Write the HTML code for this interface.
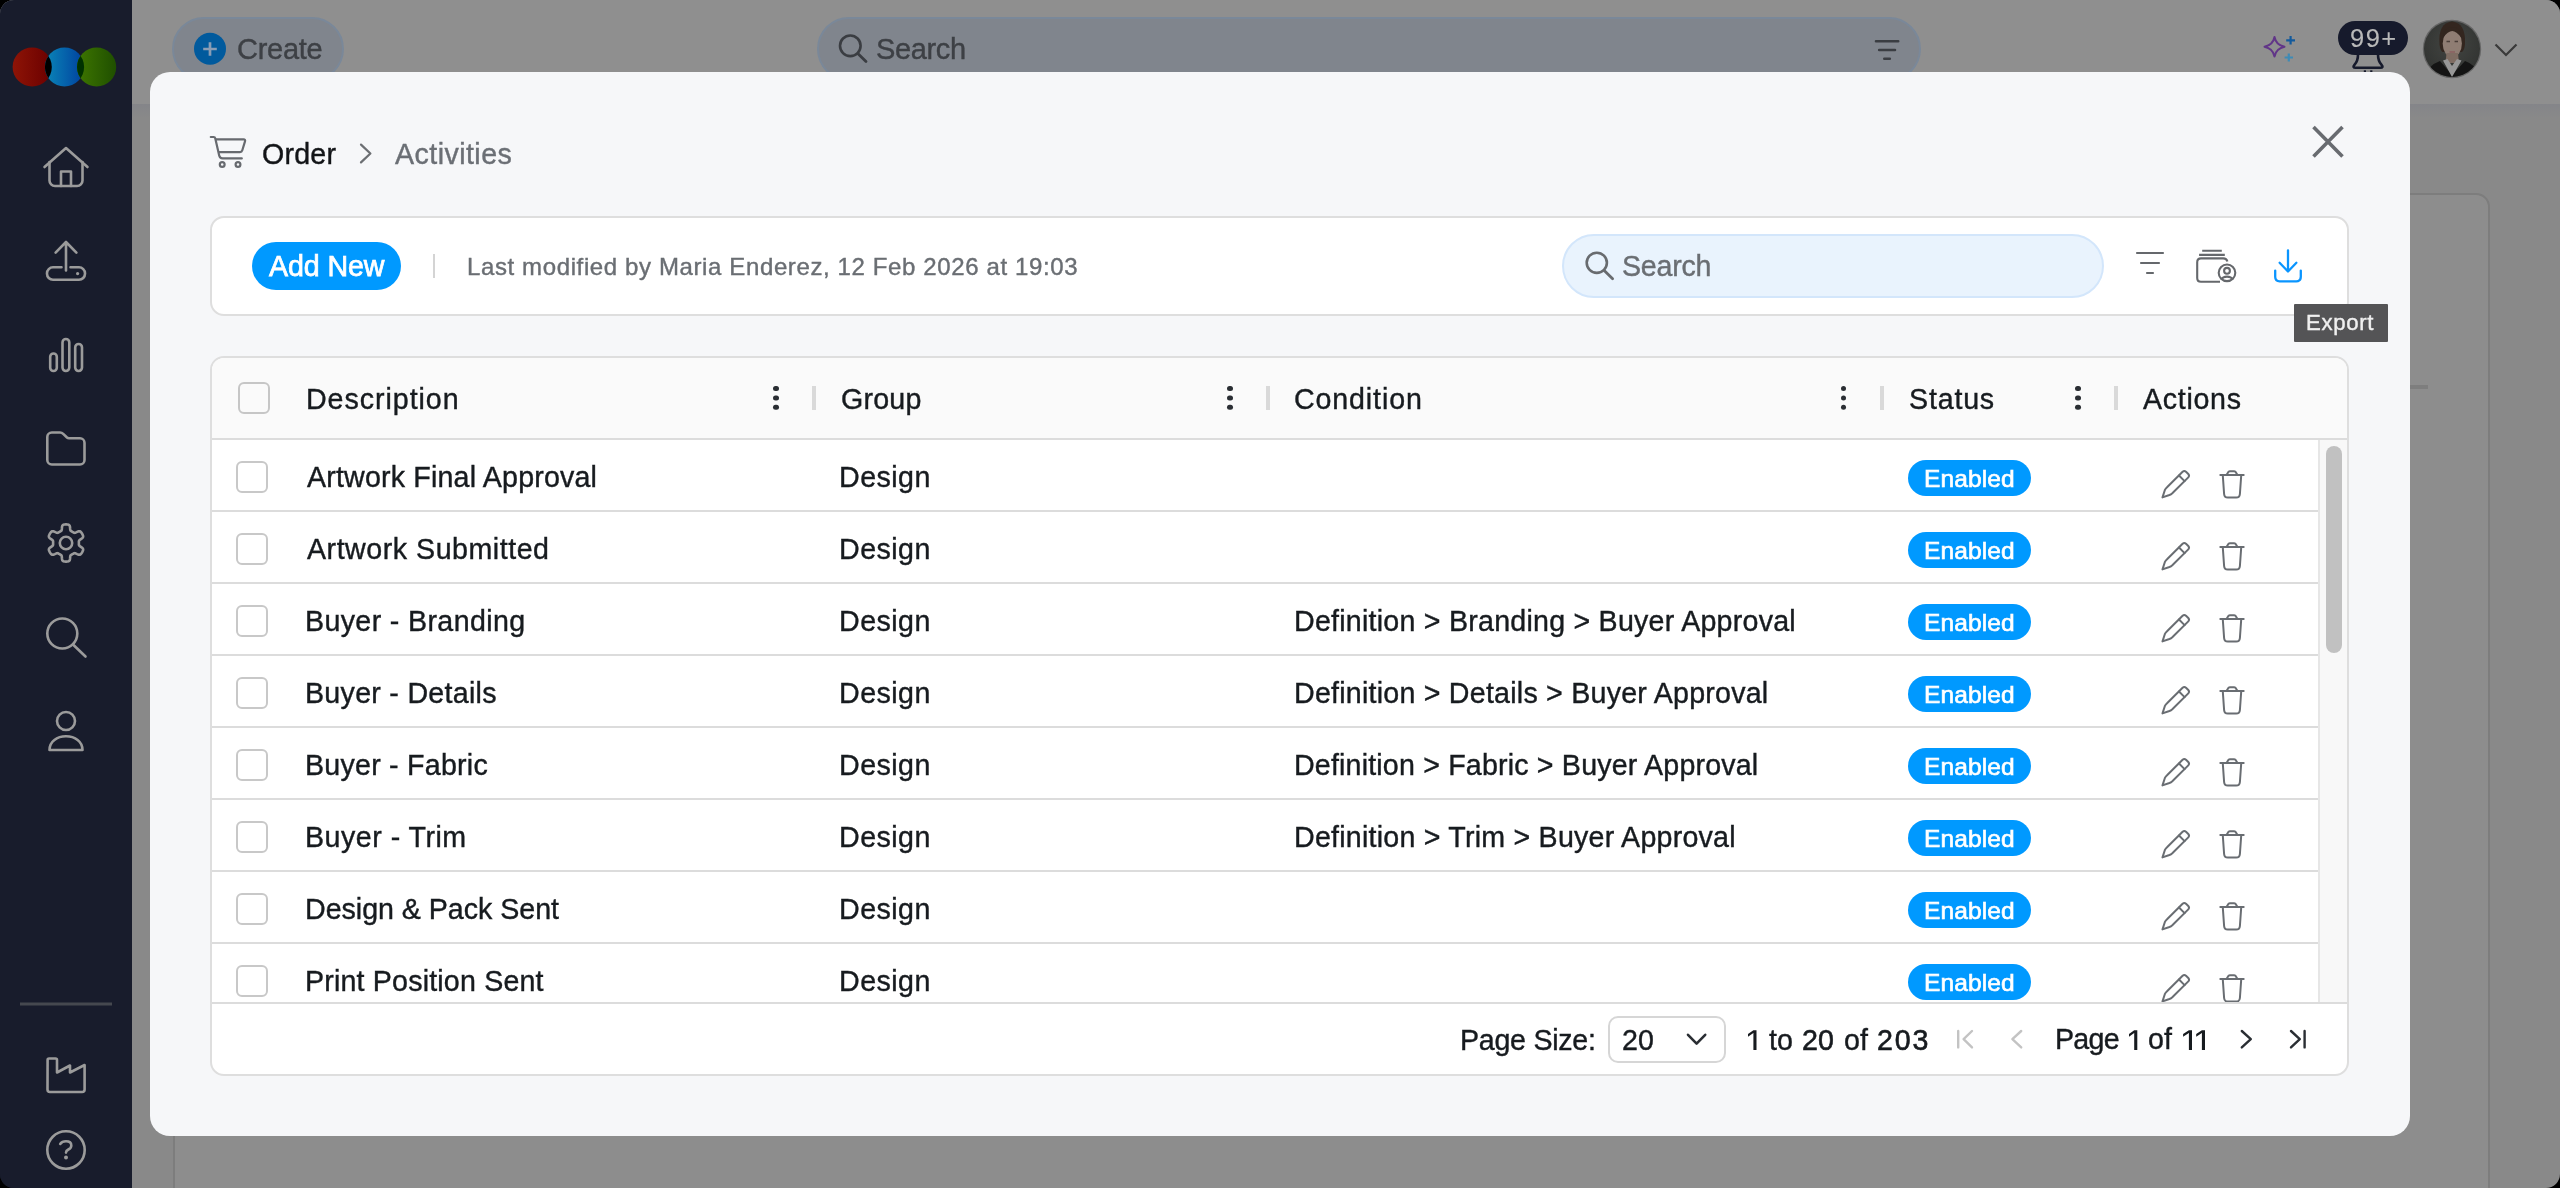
<!DOCTYPE html>
<html><head><meta charset="utf-8">
<style>
html,body{margin:0;padding:0;background:#000;}
body{width:2560px;height:1188px;overflow:hidden;position:relative;font-family:"Liberation Sans",sans-serif;}
#win{position:absolute;left:0;top:0;width:2560px;height:1188px;border-radius:14px;overflow:hidden;background:linear-gradient(to right,#181c2c 132px,#898989 132px);}
.a{position:absolute;box-sizing:border-box;}
.t{position:absolute;line-height:1;white-space:nowrap;-webkit-text-stroke-width:0.4px;will-change:transform;}
svg{position:absolute;overflow:visible;}
</style></head>
<body>
<div id="win">

<div class="a" style="left:0;top:0;width:2560px;height:104px;background:#8f8f8f"></div>
<div class="a" style="left:0;top:104px;width:2560px;height:14px;background:linear-gradient(#848589,#898989)"></div>
<div class="a" style="left:173px;top:193px;width:2317px;height:1100px;border:2px solid #7d7d7d;border-radius:14px;background:#8d8d8d"></div>
<div class="a" style="left:2410px;top:385px;width:18px;height:4px;background:#7e7e7e"></div>
<div class="a" style="left:172px;top:17px;width:172px;height:64px;border:2px solid #7a8899;border-radius:32px;background:#80858d"></div>
<div class="t" style="left:236.8px;top:35.05px;font-size:29px;letter-spacing:-0.26px;color:#3d4045;">Create</div>
<div class="a" style="left:817px;top:17px;width:1104px;height:64px;border:2px solid #7a8899;border-radius:32px;background:#80858d"></div>
<div class="t" style="left:875.6px;top:34.55px;font-size:29px;letter-spacing:-0.36px;color:#3d4045;">Search</div>
<div class="a" style="left:2338px;top:21px;width:70px;height:34px;border-radius:17px;background:#161a2c"></div>
<div class="t" style="left:2350.0px;top:26.31px;font-size:25.5px;letter-spacing:1.5px;color:#b9b9b9;-webkit-text-stroke-width:0.1px;">99+</div>
<svg style="left:0;top:0" width="2560" height="110" viewBox="0 0 2560 110" fill="none">
<defs><clipPath id="av"><circle cx="2452" cy="49" r="28"/></clipPath>
<radialGradient id="avbg" cx="0.5" cy="0.4" r="0.6"><stop offset="0" stop-color="#434542"/><stop offset="1" stop-color="#2f312f"/></radialGradient></defs>
<circle cx="2452" cy="49" r="29.2" fill="#656565"/>
<g clip-path="url(#av)">
<rect x="2420" y="18" width="64" height="64" fill="url(#avbg)"/>
<path d="M2439.5 44 Q2438 23 2452 21.5 Q2466 23 2465 44 Q2464.5 50 2462 52 L2442.5 52 Q2440 50 2439.5 44Z" fill="#33261f"/>
<ellipse cx="2452.3" cy="43.5" rx="9.6" ry="13.8" fill="#8f7d73"/>
<path d="M2442.8 38 Q2444 27 2452.3 27 Q2460.6 27 2461.8 38 Q2456 31 2452.3 31 Q2448 31 2442.8 38Z" fill="#33261f"/>
<path d="M2446.5 53 L2458 53 L2459 63 L2445.5 63Z" fill="#7f6d63"/>
<path d="M2423 82 Q2426 66 2440 61 L2452 75 L2465 61 Q2479 66 2482 82Z" fill="#141414"/>
<path d="M2443 60.5 L2452 77 L2461.5 60.5 L2457 59 L2452 66 L2447.5 59Z" fill="#979797"/>
<path d="M2446.5 41.5 H2450 M2454.6 41.5 H2458" stroke="#4a3e38" stroke-width="1.6"/>
<path d="M2449.5 52 H2455" stroke="#8a5f5f" stroke-width="1.6"/>
</g>
<path d="M2495.5 44.5 L2506 55 L2516.5 44.5" stroke="#3a3a3a" stroke-width="2.2"/>
<!-- create plus -->
<circle cx="210" cy="48.8" r="16" fill="#015a9d"/>
<path d="M203.2 49 H216.8 M210 42.2 V55.8" stroke="#8a9db5" stroke-width="2.7"/>
<!-- top search icon -->
<circle cx="850.3" cy="45.8" r="10.3" stroke="#3a3d42" stroke-width="2.6"/>
<path d="M857.8 53.4 L866 61.6" stroke="#3a3d42" stroke-width="2.8" stroke-linecap="round"/>
<!-- top filter -->
<path d="M1876 41.2 H1898.2 M1879.2 50 H1895 M1884.3 58.8 H1889.8" stroke="#3a3d42" stroke-width="2.6" stroke-linecap="round"/>
<!-- sparkle -->
<path d="M2274.5 37 Q2276 45 2284.5 46.8 Q2276 48.6 2274.5 56.5 Q2273 48.6 2264.5 46.8 Q2273 45 2274.5 37Z" stroke="#613588" stroke-width="2" stroke-linejoin="round"/>
<path d="M2286.2 40.3 H2295 M2290.6 36 V44.6" stroke="#135a9c" stroke-width="2.2"/>
<path d="M2284.6 57.5 H2293 M2288.8 53.5 V61.5" stroke="#3e8bb6" stroke-width="2.2"/>
<!-- bell base -->
<path d="M2358 54.5 Q2358 61 2354.6 64.6 Q2352 67.8 2355.8 67.8 H2380.2 Q2384 67.8 2381.4 64.6 Q2378 61 2378 54.5" stroke="#161a2c" stroke-width="2.6" stroke-linejoin="round"/>
<rect x="2363.8" y="70.3" width="2.2" height="2" fill="#161a2c"/><rect x="2370.2" y="70.3" width="2.2" height="2" fill="#161a2c"/>
</svg>
<div class="a" style="left:0;top:0;width:132px;height:1188px;background:#181c2c"></div>
<svg style="left:0;top:0" width="132" height="1188" viewBox="0 0 132 1188" fill="none">
<defs>
<linearGradient id="gr" x1="0" x2="1"><stop offset="0" stop-color="#8e1406"/><stop offset="1" stop-color="#6a0000"/></linearGradient>
<linearGradient id="gb" x1="0" x2="1"><stop offset="0" stop-color="#0a86b8"/><stop offset="1" stop-color="#00409e"/></linearGradient>
<linearGradient id="gg" x1="0" x2="1"><stop offset="0" stop-color="#3e7600"/><stop offset="1" stop-color="#1f4f00"/></linearGradient>
<clipPath id="cr"><circle cx="32.2" cy="67" r="19.6"/></clipPath>
<clipPath id="cb"><circle cx="64.5" cy="67" r="19.6"/></clipPath>
</defs>
<circle cx="32.2" cy="67" r="19.6" fill="url(#gr)"/>
<circle cx="64.5" cy="67" r="19.6" fill="url(#gb)"/>
<circle cx="96.6" cy="67" r="19.6" fill="url(#gg)"/>
<circle cx="64.5" cy="67" r="19.6" fill="#000" clip-path="url(#cr)"/>
<circle cx="96.6" cy="67" r="19.6" fill="#003200" clip-path="url(#cb)"/>
<g stroke="#9b9b9b" stroke-width="2.6" stroke-linecap="round" stroke-linejoin="round">
<path d="M44.5 167 L66 148 L87.5 167"/>
<path d="M49.5 162 V180.5 a5.5 5.5 0 0 0 5.5 5.5 H77 a5.5 5.5 0 0 0 5.5 -5.5 V162"/>
<path d="M61 186 V171.5 H71 V186"/>
<path d="M66 242 V270.5 M55.6 252.6 L66 242 L76.4 252.6"/>
<path d="M61.5 267.3 H53 a6 6 0 0 0 -6 6 v0.5 a6 6 0 0 0 6 6 H79 a6 6 0 0 0 6 -6 v-0.5 a6 6 0 0 0 -6 -6 H70.5"/>
<rect x="50.2" y="353.5" width="6.6" height="17.5" rx="3.3"/>
<rect x="62.5" y="339" width="6.8" height="32" rx="3.4"/>
<rect x="75.2" y="344" width="6.8" height="27" rx="3.4"/>
<path d="M47.3 437 a4.5 4.5 0 0 1 4.5 -4.5 H60 a4.5 4.5 0 0 1 3.2 1.3 L67 437.5 a3 3 0 0 0 2 0.8 H80 a4.5 4.5 0 0 1 4.5 4.5 V460 a4.5 4.5 0 0 1 -4.5 4.5 H51.8 a4.5 4.5 0 0 1 -4.5 -4.5 Z"/>
<path d="M66.00 524.40 L66.49 524.41 L66.97 524.43 L67.46 524.48 L67.94 524.55 L68.41 524.67 L68.87 524.85 L69.30 525.17 L69.67 525.72 L69.94 526.60 L70.08 527.79 L70.16 528.96 L70.27 529.85 L70.46 530.40 L70.70 530.74 L70.98 530.98 L71.27 531.17 L71.56 531.34 L71.86 531.50 L72.16 531.66 L72.45 531.83 L72.74 532.00 L73.03 532.17 L73.32 532.35 L73.61 532.52 L73.92 532.68 L74.26 532.80 L74.68 532.84 L75.25 532.72 L76.08 532.38 L77.14 531.86 L78.23 531.39 L79.13 531.18 L79.79 531.22 L80.28 531.44 L80.67 531.74 L81.00 532.10 L81.31 532.48 L81.59 532.87 L81.86 533.28 L82.11 533.70 L82.34 534.13 L82.56 534.56 L82.77 535.00 L82.94 535.46 L83.08 535.92 L83.15 536.42 L83.09 536.95 L82.80 537.54 L82.17 538.21 L81.21 538.92 L80.23 539.58 L79.53 540.12 L79.14 540.56 L78.97 540.95 L78.90 541.30 L78.88 541.65 L78.88 541.99 L78.89 542.32 L78.90 542.66 L78.90 543.00 L78.90 543.34 L78.89 543.68 L78.88 544.01 L78.88 544.35 L78.90 544.70 L78.97 545.05 L79.14 545.44 L79.53 545.88 L80.23 546.42 L81.21 547.08 L82.17 547.79 L82.80 548.46 L83.09 549.05 L83.15 549.58 L83.08 550.08 L82.94 550.54 L82.77 551.00 L82.56 551.44 L82.34 551.87 L82.11 552.30 L81.86 552.72 L81.59 553.13 L81.31 553.52 L81.00 553.90 L80.67 554.26 L80.28 554.56 L79.79 554.78 L79.13 554.82 L78.23 554.61 L77.14 554.14 L76.08 553.62 L75.25 553.28 L74.68 553.16 L74.26 553.20 L73.92 553.32 L73.61 553.48 L73.32 553.65 L73.03 553.83 L72.74 554.00 L72.45 554.17 L72.16 554.34 L71.86 554.50 L71.56 554.66 L71.27 554.83 L70.98 555.02 L70.70 555.26 L70.46 555.60 L70.27 556.15 L70.16 557.04 L70.08 558.21 L69.94 559.40 L69.67 560.28 L69.30 560.83 L68.87 561.15 L68.41 561.33 L67.94 561.45 L67.46 561.52 L66.97 561.57 L66.49 561.59 L66.00 561.60 L65.51 561.59 L65.03 561.57 L64.54 561.52 L64.06 561.45 L63.59 561.33 L63.13 561.15 L62.70 560.83 L62.33 560.28 L62.06 559.40 L61.92 558.21 L61.84 557.04 L61.73 556.15 L61.54 555.60 L61.30 555.26 L61.02 555.02 L60.73 554.83 L60.44 554.66 L60.14 554.50 L59.84 554.34 L59.55 554.17 L59.26 554.00 L58.97 553.83 L58.68 553.65 L58.39 553.48 L58.08 553.32 L57.74 553.20 L57.32 553.16 L56.75 553.28 L55.92 553.62 L54.86 554.14 L53.77 554.61 L52.87 554.82 L52.21 554.78 L51.72 554.56 L51.33 554.26 L51.00 553.90 L50.69 553.52 L50.41 553.13 L50.14 552.72 L49.89 552.30 L49.66 551.87 L49.44 551.44 L49.23 551.00 L49.06 550.54 L48.92 550.08 L48.85 549.58 L48.91 549.05 L49.20 548.46 L49.83 547.79 L50.79 547.08 L51.77 546.42 L52.47 545.88 L52.86 545.44 L53.03 545.05 L53.10 544.70 L53.12 544.35 L53.12 544.01 L53.11 543.68 L53.10 543.34 L53.10 543.00 L53.10 542.66 L53.11 542.32 L53.12 541.99 L53.12 541.65 L53.10 541.30 L53.03 540.95 L52.86 540.56 L52.47 540.12 L51.77 539.58 L50.79 538.92 L49.83 538.21 L49.20 537.54 L48.91 536.95 L48.85 536.42 L48.92 535.92 L49.06 535.46 L49.23 535.00 L49.44 534.56 L49.66 534.13 L49.89 533.70 L50.14 533.28 L50.41 532.87 L50.69 532.48 L51.00 532.10 L51.33 531.74 L51.72 531.44 L52.21 531.22 L52.87 531.18 L53.77 531.39 L54.86 531.86 L55.92 532.38 L56.75 532.72 L57.32 532.84 L57.74 532.80 L58.08 532.68 L58.39 532.52 L58.68 532.35 L58.97 532.17 L59.26 532.00 L59.55 531.83 L59.84 531.66 L60.14 531.50 L60.44 531.34 L60.73 531.17 L61.02 530.98 L61.30 530.74 L61.54 530.40 L61.73 529.85 L61.84 528.96 L61.92 527.79 L62.06 526.60 L62.33 525.72 L62.70 525.17 L63.13 524.85 L63.59 524.67 L64.06 524.55 L64.54 524.48 L65.03 524.43 L65.51 524.41Z"/>
<circle cx="66" cy="543" r="6.2"/>
<circle cx="62.3" cy="633.5" r="15"/>
<path d="M73.5 645 L85.5 656.5"/>
<circle cx="66" cy="721" r="9"/>
<path d="M49.5 750 C49.5 741.5 57 736.3 66 736.3 C75 736.3 82.5 741.5 82.5 750 Z"/>
<path d="M47.6 1060 a1.5 1.5 0 0 1 1.5 -1.5 H55.5 a1.5 1.5 0 0 1 1.5 1.5 V1072.5 L70 1065.5 V1072.5 L84.6 1065 V1089.5 a2.5 2.5 0 0 1 -2.5 2.5 H50 a2.5 2.5 0 0 1 -2.5 -2.5 Z"/>
<circle cx="66" cy="1150" r="18.7"/>
<path d="M60.2 1144 Q62 1141.3 66 1141.3 Q71.3 1141.3 71.3 1145.4 Q71.3 1148 68.4 1149.5 Q66 1150.7 66 1152.6"/>
</g>
<circle cx="66" cy="1157.6" r="2" fill="#9b9b9b"/>
<circle cx="77.6" cy="273.6" r="1.6" fill="#9b9b9b"/>
<rect x="20" y="1002.5" width="92" height="3" fill="#45484f"/>
</svg>
<div class="a" style="left:150px;top:72px;width:2260px;height:1064px;border-radius:20px;background:#f6f7f9"></div>
<div class="t" style="left:262.1px;top:139.59px;font-size:28.6px;letter-spacing:0.225px;color:#121417;">Order</div>
<div class="t" style="left:394.6px;top:139.59px;font-size:28.6px;letter-spacing:0.444px;color:#6b6f75;">Activities</div>
<svg style="left:0;top:0" width="2560" height="1188" viewBox="0 0 2560 1188" fill="none">
<g stroke="#676a6f" stroke-width="2.2" stroke-linecap="round" stroke-linejoin="round">
<path d="M210.8 137 H213.6 Q215 137 215.3 138.4 L219.2 155.6 Q219.8 158.4 222.6 158.4 H241.8"/>
<path d="M216 139.4 H243.6 Q245.6 139.4 245 141.3 L242.3 150.3 Q241.8 152.1 240 152.1 H219"/>
<circle cx="222.2" cy="164.5" r="2.4"/>
<circle cx="238" cy="164.5" r="2.4"/>
</g>
<path d="M361 144.6 L370.4 153.5 L361 162.4" stroke="#6c6f73" stroke-width="2.2" stroke-linecap="round" stroke-linejoin="round"/>
<path d="M2313.5 127 L2342.5 156.5 M2342.5 127 L2313.5 156.5" stroke="#686b70" stroke-width="3.6"/>
</svg>
<div class="a" style="left:210px;top:216px;width:2139px;height:100px;border:2px solid #dedede;border-radius:14px;background:#fff"></div>
<div class="a" style="left:252px;top:242px;width:149px;height:48px;border-radius:24px;background:#0099ff"></div>
<div class="t" style="left:268.6px;top:251.69px;font-size:28.6px;letter-spacing:-0.1px;color:#ffffff;-webkit-text-stroke-width:0.75px;">Add New</div>
<div class="a" style="left:433px;top:254px;width:2px;height:24px;background:#d4d4d4"></div>
<div class="t" style="left:466.5px;top:255.48px;font-size:24px;letter-spacing:0.618px;color:#6a6e73;">Last modified by Maria Enderez, 12 Feb 2026 at 19:03</div>
<div class="a" style="left:1562px;top:234px;width:542px;height:64px;border:2px solid #d3e6fb;border-radius:32px;background:#e9f3fd"></div>
<div class="t" style="left:1622.0px;top:251.69px;font-size:28.6px;letter-spacing:-0.24px;color:#6a6e73;">Search</div>
<svg style="left:0;top:0" width="2560" height="400" viewBox="0 0 2560 400" fill="none">
<circle cx="1596.8" cy="262.8" r="10.1" stroke="#686b6f" stroke-width="2.6"/>
<path d="M1604.2 270.4 L1612.6 278.8" stroke="#686b6f" stroke-width="2.8" stroke-linecap="round"/>
<path d="M2136.2 253 H2163.8 M2140.2 263 H2159.8 M2146.2 273 H2153.8" stroke="#65686c" stroke-width="2.1"/>
<g stroke="#65686c" stroke-width="2.1" fill="none">
<path d="M2202.2 250.8 H2221.8 M2199.1 254.9 H2224.8"/>
<path d="M2220 281.7 H2201 Q2197.2 281.7 2197.2 277.9 V262.2 Q2197.2 258.4 2201 258.4 H2223.2 Q2226.6 258.4 2227.4 261.6"/>
<circle cx="2227" cy="272.8" r="8.3"/>
<circle cx="2227" cy="270.8" r="2.9"/>
<path d="M2221.2 279.6 Q2222.8 276.6 2227 276.6 Q2231.2 276.6 2232.8 279.6"/>
</g>
<g stroke="#0a95ff" stroke-width="2.3" stroke-linecap="round" stroke-linejoin="round">
<path d="M2288 250.3 V271.5 M2279.6 262.8 L2288 271.5 L2296.4 262.8"/>
<path d="M2275.2 270.6 V276.8 Q2275.2 281.3 2279.7 281.3 H2296.3 Q2300.8 281.3 2300.8 276.8 V270.6"/>
</g>
</svg>
<div class="a" style="left:2294px;top:304px;width:94px;height:38px;background:#545456;border-radius:1px"></div>
<div class="t" style="left:2305.9px;top:312.01px;font-size:22.2px;letter-spacing:0.68px;color:#f0f0f0;">Export</div>
<div class="a" style="left:210px;top:356px;width:2139px;height:720px;border:2px solid #dedede;border-radius:14px;background:#fff;overflow:hidden"><div class="a" style="left:0;top:0;width:2135px;height:82px;background:#fafafa;border-bottom:2px solid #dcdcdc"></div></div>
<div class="a" style="left:238px;top:382px;width:32px;height:32px;border:2px solid #c6c6c6;border-radius:6px;background:#fafafa"></div>
<div class="t" style="left:305.8px;top:384.79px;font-size:28.6px;letter-spacing:0.96px;color:#171b1f;">Description</div>
<div class="t" style="left:840.6px;top:384.79px;font-size:28.6px;letter-spacing:0.225px;color:#171b1f;">Group</div>
<div class="t" style="left:1294.2px;top:384.79px;font-size:28.6px;letter-spacing:0.875px;color:#171b1f;">Condition</div>
<div class="t" style="left:1908.5px;top:384.79px;font-size:28.6px;letter-spacing:0.82px;color:#171b1f;">Status</div>
<div class="t" style="left:2143.2px;top:384.79px;font-size:28.6px;letter-spacing:0.7px;color:#171b1f;">Actions</div>
<div class="a" style="left:773.25px;top:385.85px;width:5.3px;height:5.3px;border-radius:50%;background:#2a2e33;box-shadow:0 9.4px 0 #2a2e33,0 18.8px 0 #2a2e33"></div>
<div class="a" style="left:812px;top:386px;width:4px;height:24px;background:#d9d9d9"></div>
<div class="a" style="left:1227.35px;top:385.85px;width:5.3px;height:5.3px;border-radius:50%;background:#2a2e33;box-shadow:0 9.4px 0 #2a2e33,0 18.8px 0 #2a2e33"></div>
<div class="a" style="left:1266px;top:386px;width:4px;height:24px;background:#d9d9d9"></div>
<div class="a" style="left:1840.85px;top:385.85px;width:5.3px;height:5.3px;border-radius:50%;background:#2a2e33;box-shadow:0 9.4px 0 #2a2e33,0 18.8px 0 #2a2e33"></div>
<div class="a" style="left:1880px;top:386px;width:4px;height:24px;background:#d9d9d9"></div>
<div class="a" style="left:2075.25px;top:385.85px;width:5.3px;height:5.3px;border-radius:50%;background:#2a2e33;box-shadow:0 9.4px 0 #2a2e33,0 18.8px 0 #2a2e33"></div>
<div class="a" style="left:2114px;top:386px;width:4px;height:24px;background:#d9d9d9"></div>
<div class="a" style="left:0;top:440px;width:2318px;height:562px;overflow:hidden">
<div class="a" style="left:212px;top:70px;width:2106px;height:2px;background:#dcdcdc"></div>
<div class="a" style="left:236px;top:21px;width:32px;height:32px;border:2px solid #c8c8c8;border-radius:6px;background:#fff"></div>
<div class="t" style="left:307.0px;top:22.99px;font-size:28.6px;letter-spacing:0.186px;color:#171b1f;">Artwork Final Approval</div>
<div class="t" style="left:839.3px;top:22.99px;font-size:28.6px;letter-spacing:0.48px;color:#171b1f;">Design</div>
<div class="a" style="left:1908px;top:20px;width:123px;height:36px;border-radius:18px;background:#0099ff"></div>
<div class="t" style="left:1923.5px;top:26.86px;font-size:24.5px;letter-spacing:0.133px;color:#ffffff;-webkit-text-stroke-width:0.65px;">Enabled</div>
<svg style="left:2152px;top:20px" width="100" height="40" viewBox="2152 460 100 40" fill="none" stroke="#696d72" stroke-width="2" stroke-linejoin="round" stroke-linecap="round">
<path d="M2162.5 497.4 L2164.8 490.2 Q2165.5 488.6 2166.8 487.5 L2182.6 471.7 Q2184.3 470.2 2186 471.7 L2188.3 474 Q2189.8 475.7 2188.3 477.4 L2172.3 493.2 Q2171 494.4 2169.4 495 Z"/>
<path d="M2179 475.5 L2184.6 481.1"/>
<path d="M2220.3 475 H2243.7"/>
<path d="M2226.8 474.5 L2228.5 471.8 Q2229 471.2 2230 471.2 H2234 Q2235 471.2 2235.5 471.8 L2237.2 474.5"/>
<path d="M2222.8 475.5 L2224.1 494 Q2224.4 497.6 2227.8 497.6 H2236.2 Q2239.6 497.6 2239.9 494 L2241.2 475.5"/>
</svg>
<div class="a" style="left:212px;top:142px;width:2106px;height:2px;background:#dcdcdc"></div>
<div class="a" style="left:236px;top:93px;width:32px;height:32px;border:2px solid #c8c8c8;border-radius:6px;background:#fff"></div>
<div class="t" style="left:307.0px;top:94.99px;font-size:28.6px;letter-spacing:0.525px;color:#171b1f;">Artwork Submitted</div>
<div class="t" style="left:839.3px;top:94.99px;font-size:28.6px;letter-spacing:0.48px;color:#171b1f;">Design</div>
<div class="a" style="left:1908px;top:92px;width:123px;height:36px;border-radius:18px;background:#0099ff"></div>
<div class="t" style="left:1923.5px;top:98.86px;font-size:24.5px;letter-spacing:0.133px;color:#ffffff;-webkit-text-stroke-width:0.65px;">Enabled</div>
<svg style="left:2152px;top:92px" width="100" height="40" viewBox="2152 460 100 40" fill="none" stroke="#696d72" stroke-width="2" stroke-linejoin="round" stroke-linecap="round">
<path d="M2162.5 497.4 L2164.8 490.2 Q2165.5 488.6 2166.8 487.5 L2182.6 471.7 Q2184.3 470.2 2186 471.7 L2188.3 474 Q2189.8 475.7 2188.3 477.4 L2172.3 493.2 Q2171 494.4 2169.4 495 Z"/>
<path d="M2179 475.5 L2184.6 481.1"/>
<path d="M2220.3 475 H2243.7"/>
<path d="M2226.8 474.5 L2228.5 471.8 Q2229 471.2 2230 471.2 H2234 Q2235 471.2 2235.5 471.8 L2237.2 474.5"/>
<path d="M2222.8 475.5 L2224.1 494 Q2224.4 497.6 2227.8 497.6 H2236.2 Q2239.6 497.6 2239.9 494 L2241.2 475.5"/>
</svg>
<div class="a" style="left:212px;top:214px;width:2106px;height:2px;background:#dcdcdc"></div>
<div class="a" style="left:236px;top:165px;width:32px;height:32px;border:2px solid #c8c8c8;border-radius:6px;background:#fff"></div>
<div class="t" style="left:305.0px;top:166.99px;font-size:28.6px;letter-spacing:0.367px;color:#171b1f;">Buyer - Branding</div>
<div class="t" style="left:839.3px;top:166.99px;font-size:28.6px;letter-spacing:0.48px;color:#171b1f;">Design</div>
<div class="t" style="left:1293.8px;top:166.99px;font-size:28.6px;letter-spacing:0.241px;color:#171b1f;">Definition &gt; Branding &gt; Buyer Approval</div>
<div class="a" style="left:1908px;top:164px;width:123px;height:36px;border-radius:18px;background:#0099ff"></div>
<div class="t" style="left:1923.5px;top:170.86px;font-size:24.5px;letter-spacing:0.133px;color:#ffffff;-webkit-text-stroke-width:0.65px;">Enabled</div>
<svg style="left:2152px;top:164px" width="100" height="40" viewBox="2152 460 100 40" fill="none" stroke="#696d72" stroke-width="2" stroke-linejoin="round" stroke-linecap="round">
<path d="M2162.5 497.4 L2164.8 490.2 Q2165.5 488.6 2166.8 487.5 L2182.6 471.7 Q2184.3 470.2 2186 471.7 L2188.3 474 Q2189.8 475.7 2188.3 477.4 L2172.3 493.2 Q2171 494.4 2169.4 495 Z"/>
<path d="M2179 475.5 L2184.6 481.1"/>
<path d="M2220.3 475 H2243.7"/>
<path d="M2226.8 474.5 L2228.5 471.8 Q2229 471.2 2230 471.2 H2234 Q2235 471.2 2235.5 471.8 L2237.2 474.5"/>
<path d="M2222.8 475.5 L2224.1 494 Q2224.4 497.6 2227.8 497.6 H2236.2 Q2239.6 497.6 2239.9 494 L2241.2 475.5"/>
</svg>
<div class="a" style="left:212px;top:286px;width:2106px;height:2px;background:#dcdcdc"></div>
<div class="a" style="left:236px;top:237px;width:32px;height:32px;border:2px solid #c8c8c8;border-radius:6px;background:#fff"></div>
<div class="t" style="left:305.0px;top:238.99px;font-size:28.6px;letter-spacing:0.286px;color:#171b1f;">Buyer - Details</div>
<div class="t" style="left:839.3px;top:238.99px;font-size:28.6px;letter-spacing:0.48px;color:#171b1f;">Design</div>
<div class="t" style="left:1293.8px;top:238.99px;font-size:28.6px;letter-spacing:0.236px;color:#171b1f;">Definition &gt; Details &gt; Buyer Approval</div>
<div class="a" style="left:1908px;top:236px;width:123px;height:36px;border-radius:18px;background:#0099ff"></div>
<div class="t" style="left:1923.5px;top:242.86px;font-size:24.5px;letter-spacing:0.133px;color:#ffffff;-webkit-text-stroke-width:0.65px;">Enabled</div>
<svg style="left:2152px;top:236px" width="100" height="40" viewBox="2152 460 100 40" fill="none" stroke="#696d72" stroke-width="2" stroke-linejoin="round" stroke-linecap="round">
<path d="M2162.5 497.4 L2164.8 490.2 Q2165.5 488.6 2166.8 487.5 L2182.6 471.7 Q2184.3 470.2 2186 471.7 L2188.3 474 Q2189.8 475.7 2188.3 477.4 L2172.3 493.2 Q2171 494.4 2169.4 495 Z"/>
<path d="M2179 475.5 L2184.6 481.1"/>
<path d="M2220.3 475 H2243.7"/>
<path d="M2226.8 474.5 L2228.5 471.8 Q2229 471.2 2230 471.2 H2234 Q2235 471.2 2235.5 471.8 L2237.2 474.5"/>
<path d="M2222.8 475.5 L2224.1 494 Q2224.4 497.6 2227.8 497.6 H2236.2 Q2239.6 497.6 2239.9 494 L2241.2 475.5"/>
</svg>
<div class="a" style="left:212px;top:358px;width:2106px;height:2px;background:#dcdcdc"></div>
<div class="a" style="left:236px;top:309px;width:32px;height:32px;border:2px solid #c8c8c8;border-radius:6px;background:#fff"></div>
<div class="t" style="left:305.0px;top:310.99px;font-size:28.6px;letter-spacing:0.246px;color:#171b1f;">Buyer - Fabric</div>
<div class="t" style="left:839.3px;top:310.99px;font-size:28.6px;letter-spacing:0.48px;color:#171b1f;">Design</div>
<div class="t" style="left:1293.8px;top:310.99px;font-size:28.6px;letter-spacing:0.184px;color:#171b1f;">Definition &gt; Fabric &gt; Buyer Approval</div>
<div class="a" style="left:1908px;top:308px;width:123px;height:36px;border-radius:18px;background:#0099ff"></div>
<div class="t" style="left:1923.5px;top:314.86px;font-size:24.5px;letter-spacing:0.133px;color:#ffffff;-webkit-text-stroke-width:0.65px;">Enabled</div>
<svg style="left:2152px;top:308px" width="100" height="40" viewBox="2152 460 100 40" fill="none" stroke="#696d72" stroke-width="2" stroke-linejoin="round" stroke-linecap="round">
<path d="M2162.5 497.4 L2164.8 490.2 Q2165.5 488.6 2166.8 487.5 L2182.6 471.7 Q2184.3 470.2 2186 471.7 L2188.3 474 Q2189.8 475.7 2188.3 477.4 L2172.3 493.2 Q2171 494.4 2169.4 495 Z"/>
<path d="M2179 475.5 L2184.6 481.1"/>
<path d="M2220.3 475 H2243.7"/>
<path d="M2226.8 474.5 L2228.5 471.8 Q2229 471.2 2230 471.2 H2234 Q2235 471.2 2235.5 471.8 L2237.2 474.5"/>
<path d="M2222.8 475.5 L2224.1 494 Q2224.4 497.6 2227.8 497.6 H2236.2 Q2239.6 497.6 2239.9 494 L2241.2 475.5"/>
</svg>
<div class="a" style="left:212px;top:430px;width:2106px;height:2px;background:#dcdcdc"></div>
<div class="a" style="left:236px;top:381px;width:32px;height:32px;border:2px solid #c8c8c8;border-radius:6px;background:#fff"></div>
<div class="t" style="left:305.0px;top:382.99px;font-size:28.6px;letter-spacing:0.5px;color:#171b1f;">Buyer - Trim</div>
<div class="t" style="left:839.3px;top:382.99px;font-size:28.6px;letter-spacing:0.48px;color:#171b1f;">Design</div>
<div class="t" style="left:1293.8px;top:382.99px;font-size:28.6px;letter-spacing:0.233px;color:#171b1f;">Definition &gt; Trim &gt; Buyer Approval</div>
<div class="a" style="left:1908px;top:380px;width:123px;height:36px;border-radius:18px;background:#0099ff"></div>
<div class="t" style="left:1923.5px;top:386.86px;font-size:24.5px;letter-spacing:0.133px;color:#ffffff;-webkit-text-stroke-width:0.65px;">Enabled</div>
<svg style="left:2152px;top:380px" width="100" height="40" viewBox="2152 460 100 40" fill="none" stroke="#696d72" stroke-width="2" stroke-linejoin="round" stroke-linecap="round">
<path d="M2162.5 497.4 L2164.8 490.2 Q2165.5 488.6 2166.8 487.5 L2182.6 471.7 Q2184.3 470.2 2186 471.7 L2188.3 474 Q2189.8 475.7 2188.3 477.4 L2172.3 493.2 Q2171 494.4 2169.4 495 Z"/>
<path d="M2179 475.5 L2184.6 481.1"/>
<path d="M2220.3 475 H2243.7"/>
<path d="M2226.8 474.5 L2228.5 471.8 Q2229 471.2 2230 471.2 H2234 Q2235 471.2 2235.5 471.8 L2237.2 474.5"/>
<path d="M2222.8 475.5 L2224.1 494 Q2224.4 497.6 2227.8 497.6 H2236.2 Q2239.6 497.6 2239.9 494 L2241.2 475.5"/>
</svg>
<div class="a" style="left:212px;top:502px;width:2106px;height:2px;background:#dcdcdc"></div>
<div class="a" style="left:236px;top:453px;width:32px;height:32px;border:2px solid #c8c8c8;border-radius:6px;background:#fff"></div>
<div class="t" style="left:305.0px;top:454.99px;font-size:28.6px;letter-spacing:-0.018px;color:#171b1f;">Design &amp; Pack Sent</div>
<div class="t" style="left:839.3px;top:454.99px;font-size:28.6px;letter-spacing:0.48px;color:#171b1f;">Design</div>
<div class="a" style="left:1908px;top:452px;width:123px;height:36px;border-radius:18px;background:#0099ff"></div>
<div class="t" style="left:1923.5px;top:458.86px;font-size:24.5px;letter-spacing:0.133px;color:#ffffff;-webkit-text-stroke-width:0.65px;">Enabled</div>
<svg style="left:2152px;top:452px" width="100" height="40" viewBox="2152 460 100 40" fill="none" stroke="#696d72" stroke-width="2" stroke-linejoin="round" stroke-linecap="round">
<path d="M2162.5 497.4 L2164.8 490.2 Q2165.5 488.6 2166.8 487.5 L2182.6 471.7 Q2184.3 470.2 2186 471.7 L2188.3 474 Q2189.8 475.7 2188.3 477.4 L2172.3 493.2 Q2171 494.4 2169.4 495 Z"/>
<path d="M2179 475.5 L2184.6 481.1"/>
<path d="M2220.3 475 H2243.7"/>
<path d="M2226.8 474.5 L2228.5 471.8 Q2229 471.2 2230 471.2 H2234 Q2235 471.2 2235.5 471.8 L2237.2 474.5"/>
<path d="M2222.8 475.5 L2224.1 494 Q2224.4 497.6 2227.8 497.6 H2236.2 Q2239.6 497.6 2239.9 494 L2241.2 475.5"/>
</svg>
<div class="a" style="left:212px;top:574px;width:2106px;height:2px;background:#dcdcdc"></div>
<div class="a" style="left:236px;top:525px;width:32px;height:32px;border:2px solid #c8c8c8;border-radius:6px;background:#fff"></div>
<div class="t" style="left:305.0px;top:526.99px;font-size:28.6px;letter-spacing:0.183px;color:#171b1f;">Print Position Sent</div>
<div class="t" style="left:839.3px;top:526.99px;font-size:28.6px;letter-spacing:0.48px;color:#171b1f;">Design</div>
<div class="a" style="left:1908px;top:524px;width:123px;height:36px;border-radius:18px;background:#0099ff"></div>
<div class="t" style="left:1923.5px;top:530.86px;font-size:24.5px;letter-spacing:0.133px;color:#ffffff;-webkit-text-stroke-width:0.65px;">Enabled</div>
<svg style="left:2152px;top:524px" width="100" height="40" viewBox="2152 460 100 40" fill="none" stroke="#696d72" stroke-width="2" stroke-linejoin="round" stroke-linecap="round">
<path d="M2162.5 497.4 L2164.8 490.2 Q2165.5 488.6 2166.8 487.5 L2182.6 471.7 Q2184.3 470.2 2186 471.7 L2188.3 474 Q2189.8 475.7 2188.3 477.4 L2172.3 493.2 Q2171 494.4 2169.4 495 Z"/>
<path d="M2179 475.5 L2184.6 481.1"/>
<path d="M2220.3 475 H2243.7"/>
<path d="M2226.8 474.5 L2228.5 471.8 Q2229 471.2 2230 471.2 H2234 Q2235 471.2 2235.5 471.8 L2237.2 474.5"/>
<path d="M2222.8 475.5 L2224.1 494 Q2224.4 497.6 2227.8 497.6 H2236.2 Q2239.6 497.6 2239.9 494 L2241.2 475.5"/>
</svg>
</div>
<div class="a" style="left:2318px;top:440px;width:29px;height:562px;background:#f8f8f8;border-left:2px solid #e6e6e6"></div>
<div class="a" style="left:2326px;top:446px;width:16px;height:207px;border-radius:8px;background:#c1c1c1"></div>
<div class="a" style="left:212px;top:1002px;width:2135px;height:2px;background:#dcdcdc"></div>
<div class="t" style="left:1460.0px;top:1025.99px;font-size:28.6px;letter-spacing:-0.267px;color:#171b1f;">Page Size:</div>
<div class="a" style="left:1608px;top:1016px;width:118px;height:47px;border:2px solid #d6d6d6;border-radius:10px;background:#fff"></div>
<div class="t" style="left:1621.5px;top:1025.99px;font-size:28.6px;letter-spacing:0.0px;color:#171b1f;">20</div>
<div class="t" style="left:1768.8px;top:1025.99px;font-size:28.6px;letter-spacing:0.0px;color:#171b1f;">to</div>
<div class="t" style="left:1802.2px;top:1025.99px;font-size:28.6px;letter-spacing:0.0px;color:#171b1f;-webkit-text-stroke-width:0.6px;">20</div>
<div class="t" style="left:1843.8px;top:1025.99px;font-size:28.6px;letter-spacing:0.0px;color:#171b1f;">of</div>
<div class="t" style="left:1876.7px;top:1025.99px;font-size:28.6px;letter-spacing:1.9px;color:#171b1f;-webkit-text-stroke-width:0.6px;">203</div>
<div class="t" style="left:2054.8px;top:1025.29px;font-size:28.6px;letter-spacing:-0.7px;color:#171b1f;">Page</div>
<div class="t" style="left:2148.4px;top:1025.29px;font-size:28.6px;letter-spacing:0.0px;color:#171b1f;">of</div>
<svg style="left:0;top:0" width="2560" height="1188" viewBox="0 0 2560 1188" fill="none">
<path d="M1753.4 1030.2 H1756.5 V1049.9 H1753.4 V1033.1 L1748.0 1036.8 V1034.0 Z M2134.2 1030.2 H2137.3 V1049.9 H2134.2 V1033.1 L2129.0 1036.8 V1034.0 Z M2188.9 1030.2 H2192.0 V1049.9 H2188.9 V1033.1 L2183.1 1036.8 V1034.0 Z M2201.9 1030.2 H2205.0 V1049.9 H2201.9 V1033.1 L2196.2 1036.8 V1034.0 Z" fill="#171b1f"/>
<path d="M1688 1034.8 L1696.6 1043.6 L1705.2 1034.8" stroke="#2a2e33" stroke-width="2.6" stroke-linecap="round" stroke-linejoin="round"/>
<g stroke="#c3c3c3" stroke-width="2.4" stroke-linecap="round" stroke-linejoin="round">
<path d="M1958.2 1031 V1047.4 M1972 1031 L1963.6 1039.2 L1972 1047.4"/>
<path d="M2021.2 1031 L2012.4 1039.2 L2021.2 1047.4"/>
</g>
<g stroke="#2a2e33" stroke-width="2.4" stroke-linecap="round" stroke-linejoin="round">
<path d="M2241.8 1031 L2250.8 1039.2 L2241.8 1047.4"/>
<path d="M2304.6 1031 V1047.4 M2291 1031 L2299.8 1039.2 L2291 1047.4"/>
</g>
</svg>
</div></body></html>
